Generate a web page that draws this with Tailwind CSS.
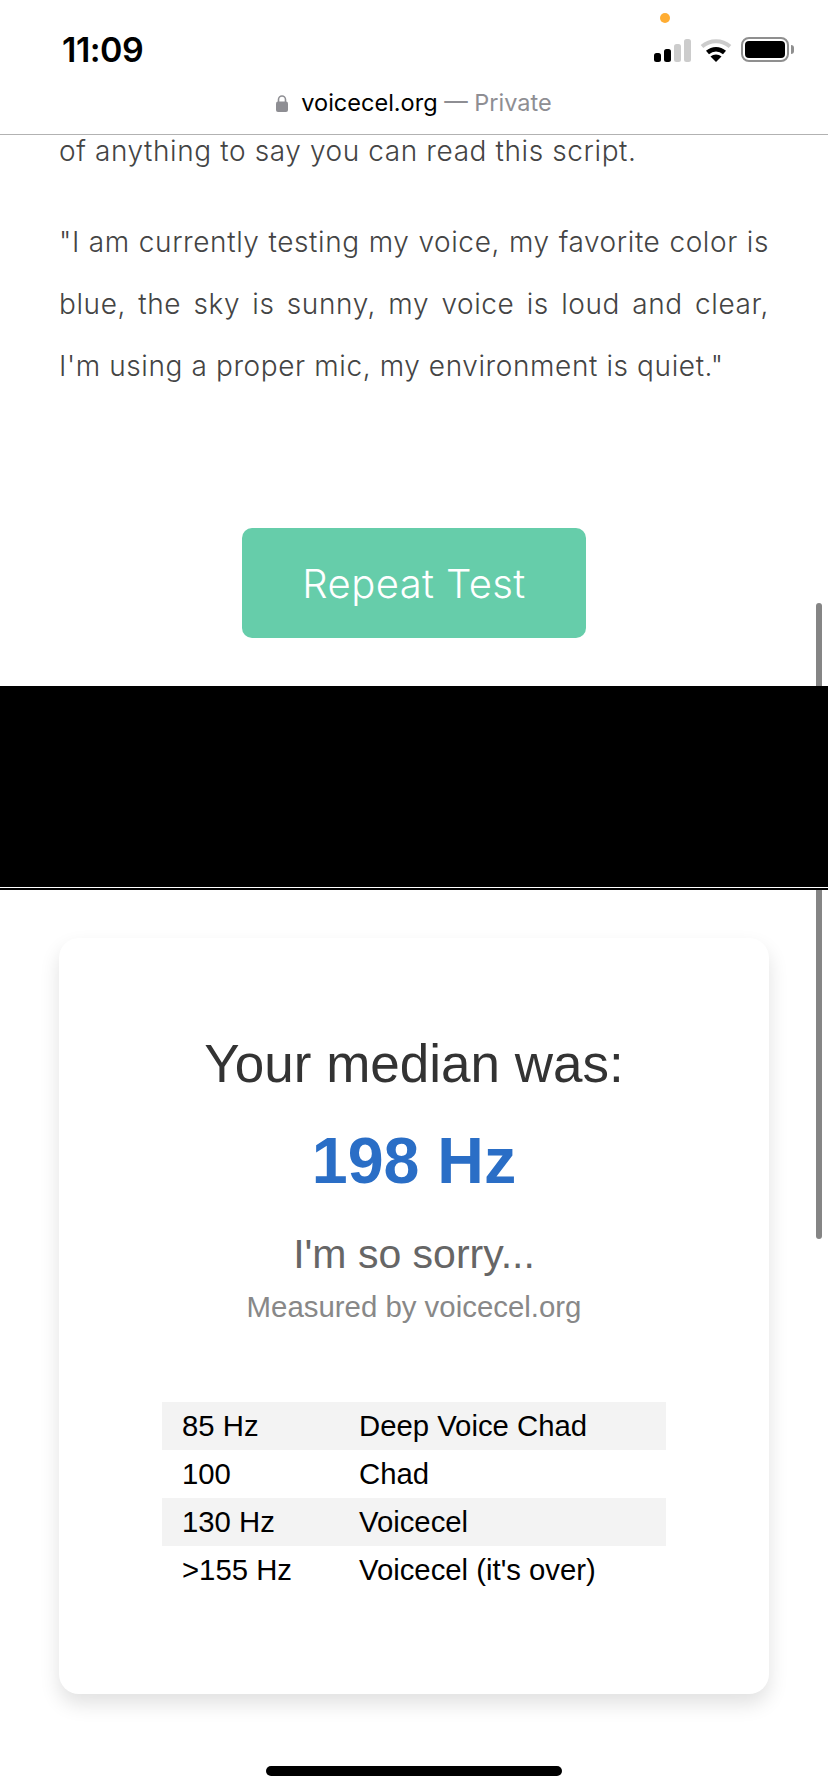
<!DOCTYPE html>
<html lang="en">
<head>
  <meta charset="UTF-8" />
  <title>voicecel.org</title>
  <script src="https://cdn.jsdelivr.net/npm/@tailwindcss/browser@4"></script>
</head>
<body class="relative h-[1792px] w-[828px] overflow-hidden bg-white font-['Inter',sans-serif]">

  <!-- phone status bar + address bar -->
  <header class="relative z-20 h-[135px] border-b border-[#b2b2b2] bg-white">
    <div class="absolute left-[665px] top-[18px] size-[10px] -translate-x-1/2 -translate-y-1/2 rounded-full bg-[#ffad33]"></div>
    <div class="flex h-[88px] items-start justify-between pl-[62px] pr-[34px] pt-[30px]">
      <span class="text-[34px] font-semibold leading-[40px] tracking-[-0.5px] text-black">11:09</span>
      <div class="flex items-end gap-[9px] pt-[7px]">
        <svg width="37" height="23" viewBox="0 0 37 23">
          <rect x="0" y="14" width="7" height="9" rx="2.5" fill="#000" />
          <rect x="10" y="10" width="7" height="13" rx="2.5" fill="#000" />
          <rect x="20" y="5" width="7" height="18" rx="2.5" fill="#cccccc" />
          <rect x="30" y="0" width="7" height="23" rx="2.5" fill="#cccccc" />
        </svg>
        <svg width="32" height="24" viewBox="0 0 32 24">
          <path d="M2 8.5C10 1.5 22 1.5 30 8.5" fill="none" stroke="#cccccc" stroke-width="4" />
          <path d="M7.5 14.5C12.5 10 19.5 10 24.5 14.5" fill="none" stroke="#000" stroke-width="4.5" />
          <path d="M16 24L10.5 18.5C13.5 15.8 18.5 15.8 21.5 18.5Z" fill="#000" />
        </svg>
        <div class="flex items-center gap-[2px]">
          <div class="flex h-[25px] w-[48px] items-center justify-center rounded-[8px] border-2 border-[#8f8f8f] p-[2px]">
            <div class="h-full w-full rounded-[4px] bg-black"></div>
          </div>
          <div class="h-[9px] w-[3px] rounded-r-full bg-[#8f8f8f]"></div>
        </div>
      </div>
    </div>
    <div class="flex items-center justify-center gap-[13px] text-[23.5px] leading-[30px]">
      <svg width="12" height="17" viewBox="0 0 12 17">
        <path d="M2.5 7V4.5a3.5 3.5 0 0 1 7 0V7" fill="none" stroke="#8e8e93" stroke-width="1.6" />
        <rect x="0" y="6.5" width="12" height="10.5" rx="2" fill="#8e8e93" />
      </svg>
      <p class="text-black">voicecel.org <span class="text-[#8e8e93]">— Private</span></p>
    </div>
  </header>

  <main class="relative">
    <section class="px-[59px] font-light tracking-[0.6px] text-[#444444]">
      <p class="text-[28px] leading-[62px] -mt-[15px]">of anything to say you can read this script.</p>
      <p class="mt-[29px] text-justify text-[28px] leading-[62px]">"I am currently testing my voice, my favorite color is blue, the sky is sunny, my voice is loud and clear, I'm using a proper mic, my environment is quiet."</p>
    </section>

    <div class="mt-[131px] flex justify-center">
      <button class="h-[110px] w-[344px] rounded-[10px] bg-[#66cdaa] pt-[2px] text-[40px] font-[350] tracking-[0.4px] text-white">Repeat Test</button>
    </div>

    <div class="relative z-10 mt-[48px] h-[201px] bg-black"></div>
    <div class="relative z-10 h-[1px] bg-white"></div>
    <div class="relative z-10 h-[2px] bg-black"></div>

    <section class="mx-[59px] mt-[48px] h-[756px] rounded-[20px] bg-white pt-[94px] text-center font-['Liberation_Sans',sans-serif] shadow-[0_10px_20px_rgba(0,0,0,0.12)]">
      <h2 class="text-[53px] leading-[64px] text-[#333333]">Your median was:</h2>
      <p class="mt-[33px] text-[64.5px] font-bold leading-[64px] text-[#2a6ec6]">198 Hz</p>
      <p class="mt-[36px] text-[41px] leading-[50px] text-[#666666]">I'm so sorry...</p>
      <p class="mt-[8px] text-[29.4px] leading-[40px] text-[#888888]">Measured by voicecel.org</p>

      <table class="mx-auto mt-[75px] w-[504px] border-collapse text-left text-[29.3px] leading-[48px] text-black">
        <tbody>
          <tr class="bg-[#f3f3f3]"><td class="w-[197px] py-0 pl-[20px]">85 Hz</td><td>Deep Voice Chad</td></tr>
          <tr><td class="pl-[20px]">100</td><td>Chad</td></tr>
          <tr class="bg-[#f3f3f3]"><td class="pl-[20px]">130 Hz</td><td>Voicecel</td></tr>
          <tr><td class="pl-[20px]">&gt;155 Hz</td><td>Voicecel (it's over)</td></tr>
        </tbody>
      </table>
    </section>
  </main>

  <!-- scrollbar and home indicator sit over the page -->
  <div class="absolute left-[816px] top-[603px] z-0 h-[636px] w-[6px] rounded-full bg-[#858585]"></div>
  <div class="absolute left-[266px] top-[1766px] z-20 h-[10px] w-[296px] rounded-full bg-black"></div>
</body>
</html>
